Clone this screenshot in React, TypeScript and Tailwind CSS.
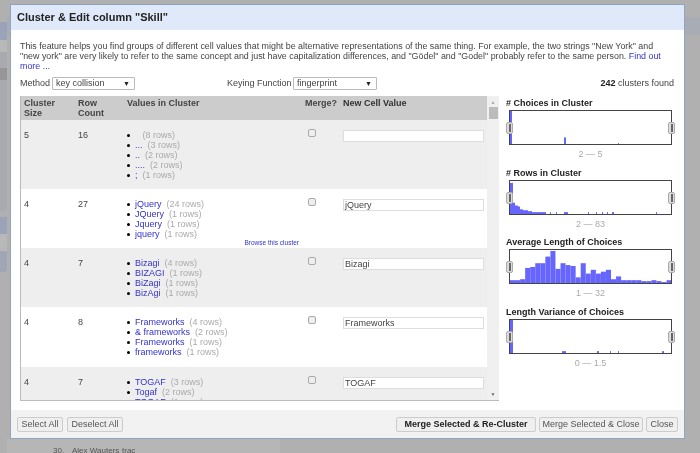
const FONT = "font-['Liberation_Sans',Arial,sans-serif]";

type Row = { size: number; count: number; bg: string; h: string; input: string; values: [string, string][]; browse?: boolean };

const rows: Row[] = [
  { size: 5, count: 16, bg: "bg-[#eeeeee]", h: "h-[69px]", input: "", values: [["\u00a0", "8 rows"], ["...", "3 rows"], ["..", "2 rows"], ["....", "2 rows"], [";", "1 rows"]] },
  { size: 4, count: 27, bg: "bg-white", h: "h-[59px]", input: "jQuery", browse: true, values: [["jQuery", "24 rows"], ["JQuery", "1 rows"], ["Jquery", "1 rows"], ["jquery", "1 rows"]] },
  { size: 4, count: 7, bg: "bg-[#eeeeee]", h: "h-[59px]", input: "Bizagi", values: [["Bizagi", "4 rows"], ["BIZAGI", "1 rows"], ["BiZagi", "1 rows"], ["BizAgi", "1 rows"]] },
  { size: 4, count: 8, bg: "bg-white", h: "h-[60px]", input: "Frameworks", values: [["Frameworks", "4 rows"], ["& frameworks", "2 rows"], ["Frameworks", "1 rows"], ["frameworks", "1 rows"]] },
  { size: 4, count: 7, bg: "bg-[#eeeeee]", h: "h-[59px]", input: "TOGAF", values: [["TOGAF", "3 rows"], ["Togaf", "2 rows"], ["TOGAF", "1 rows"]] },
];

type Bar = [number, number, number];

const seq = (start: number, w: number, hs: number[]): Bar[] => hs.map((h, i) => [start + i * w, w, h] as Bar);

const charts: { title: string; range: string; bars: Bar[]; mt: string }[] = [
  { title: "# Choices in Cluster", range: "2 — 5", mt: "mt-0", bars: [[0, 2, 35], [54, 2, 7], [108, 1, 1]] },
  {
    title: "# Rows in Cluster", range: "2 — 83", mt: "mt-[7px]",
    bars: [[0, 3, 33], [3, 2, 12], [5, 3, 9], [8, 2, 8], [10, 3, 5], [13, 5, 4], [18, 4, 3], [22, 14, 2], [40, 1, 2], [46, 1, 2], [54, 4, 2], [78, 1, 2], [86, 1, 2], [92, 1, 2], [97, 1, 2], [102, 2, 2], [146, 1, 2]],
  },
  {
    title: "Average Length of Choices", range: "1 — 32", mt: "mt-[6px]",
    bars: seq(0, 5.05, [3, 3, 4, 16, 17, 21, 21, 28, 34, 15, 21, 19, 18, 6, 21, 10, 14, 10, 12, 14, 4, 7, 3, 3, 3, 3, 2, 2, 3, 2, 1, 3]),
  },
  {
    title: "Length Variance of Choices", range: "0 — 1.5", mt: "mt-[7px]",
    bars: [[0, 3, 35], [52, 4, 2], [87, 2, 2], [100, 1, 2], [108, 1, 2], [152, 2, 2]],
  },
];

function Handle({ side }: { side: "left-[-4px]" | "right-[-4px]" }) {
  return (
    <div className={`absolute top-[11px] ${side} flex h-[12px] w-[7px] items-center justify-center rounded-[2px] border border-[#aaaaaa] bg-[#dddddd]`}>
      <div className="h-[8px] w-[2px] bg-[#666666]" />
    </div>
  );
}

function Chart({ title, range, bars, mt }: { title: string; range: string; bars: Bar[]; mt: string }) {
  return (
    <div className={mt}>
      <div className="h-[12px] text-[9px] leading-[12px] font-bold text-[#222222]">{title}</div>
      <div className="relative mt-[1px] ml-[3px] h-[35px] w-[163px] border border-[#444444] bg-white">
        <svg width="161" height="33" viewBox="0 0 161 35" preserveAspectRatio="none" className="block">
          {bars.map(([x, w, h], i) => (
            <rect key={i} x={x} y={35 - h} width={w} height={h} fill="#6666ff" />
          ))}
        </svg>
        <Handle side="left-[-4px]" />
        <Handle side="right-[-4px]" />
      </div>
      <div className="mt-[3px] ml-[3px] w-[163px] text-center text-[9px] leading-[12px] text-[#aaaaaa]">{range}</div>
    </div>
  );
}

function Btn({ children, bold, w }: { children: string; bold?: boolean; w: string }) {
  return (
    <button className={`${w} h-[15px] rounded-[2px] border border-[#cccccc] bg-[#efefef] text-center text-[9px] leading-[13px] whitespace-nowrap ${bold ? "font-bold text-[#222222]" : "text-[#555555]"}`}>
      {children}
    </button>
  );
}

function Select({ value, w }: { value: string; w: string }) {
  return (
    <div className={`${w} -mt-[1px] flex h-[13px] items-center justify-between rounded-[1px] border border-[#bbbbbb] bg-white pr-[4px] pl-[3px] text-[9px] leading-[11px] text-[#444444]`}>
      <span>{value}</span>
      <span className="text-[7px] leading-[7px] text-[#222222]">▼</span>
    </div>
  );
}

function ClusterRow({ r }: { r: Row }) {
  return (
    <div className={`${r.bg} ${r.h} relative flex shrink-0 pt-[10px] text-[9px] leading-[10px] text-[#444444]`}>
      <div className="w-[57px] pl-[3px]">{r.size}</div>
      <div className="w-[49px]">{r.count}</div>
      <ul className="w-[178px] list-none">
        {r.values.map(([v, c], i) => (
          <li key={i} className="flex items-center">
            <span className="mr-[5px] h-[3px] w-[3px] shrink-0 rounded-full bg-black" />
            <span className="text-[#3333cc]">{v}</span>
            <span className="ml-[5px] text-[#aaaaaa]">({c})</span>
          </li>
        ))}
      </ul>
      <div className="-mt-[1px] w-[38px] pl-[3px]">
        <div className="h-[8px] w-[8px] rounded-[2px] border border-[#aaaaaa] bg-[#eeeeee]" />
      </div>
      <div className="h-[12px] w-[141px] border border-[#dddddd] bg-white px-[1px] text-[9px] leading-[10px] text-[#444444]">{r.input}</div>
      {r.browse && (
        <div className="absolute right-[188px] bottom-[1px] text-[6.5px] leading-[8px] text-[#3333cc]">Browse this cluster</div>
      )}
    </div>
  );
}

export default function App() {
  return (
    <div className={`${FONT} relative h-[453px] w-[700px] overflow-hidden bg-[#b0b0b0] blur-[0.4px]`}>
      {/* page behind the dialog */}
      <div className="flex h-[453px]">
        <div className="flex w-[7px] shrink-0 flex-col">
          <div className="mt-[22px] h-[189px] rounded-r-[3px] bg-[#a9a9b0]">
            <div className="h-[18px] bg-[#9aa3b8]" />
            <div className="h-[12px] bg-[#b8b8b8]" />
            <div className="mt-[16px] h-[12px] bg-[#969696]" />
          </div>
          <div className="mt-[6px] h-[55px] rounded-r-[3px] bg-[#a0a6b6]">
            <div className="h-[17px] bg-[#9aa3b8]" />
            <div className="h-[17px] bg-[#b8b8b8]" />
          </div>
        </div>
        <div className="flex min-w-0 flex-1 flex-col">
          <div className="mt-[17px] h-[18px] w-full bg-[#a8acb4]" />
          <div className="mt-auto flex h-[14px] w-[273px] items-start overflow-hidden bg-[#b6b6b6] pt-[7px] pl-[46px] text-[8px] leading-[9px] text-[#555555]">
            <span className="w-[19px]">30.</span>
            <span className="w-[50px]">Alex Wauters</span>
            <span>trac</span>
          </div>
        </div>
      </div>

      {/* dialog */}
      <div className="absolute top-[4px] left-[10px] flex h-[435px] w-[675px] flex-col border border-[#8ea6c0] bg-white">
        <div className="flex h-[25px] shrink-0 items-center bg-[#dfe9fa] pl-[6px] text-[11px] font-bold text-[#222222]">
          Cluster &amp; Edit column "Skill"
        </div>

        <div className="flex min-h-0 flex-1 flex-col px-[9px] pt-[11px]">
          <p className="h-[31px] text-[8.9px] leading-[10px] whitespace-nowrap text-[#444444]">
            This feature helps you find groups of different cell values that might be alternative representations of the same thing. For example, the two strings "New York" and
            <br />
            "new york" are very likely to refer to the same concept and just have capitalization differences, and "Gödel" and "Godel" probably refer to the same person.{" "}
            <span className="text-[#3333cc]">Find out</span>
            <br />
            <span className="text-[#3333cc]">more ...</span>
          </p>

          <div className="mt-[5px] flex h-[14px] items-center text-[9px] text-[#444444]">
            <span className="w-[32px]">Method</span>
            <Select value="key collision" w="w-[83px]" />
            <span className="ml-[92px] w-[66px]">Keying Function</span>
            <Select value="fingerprint" w="w-[84px]" />
            <span className="ml-auto pr-[1px]">
              <b className="text-[#222222]">242</b> clusters found
            </span>
          </div>

          <div className="mt-[5px] flex min-h-0 flex-1 gap-[7px]">
            <div className="flex h-[305px] w-[479px] shrink-0 border-b border-l border-[#bbbbbb]">
              <div className="flex min-w-0 flex-1 flex-col overflow-hidden">
                <div className="flex h-[24px] shrink-0 bg-[#cccccc] pt-[2px] text-[9px] leading-[10px] font-bold text-[#444444]">
                  <div className="w-[57px] pl-[3px]">Cluster<br />Size</div>
                  <div className="w-[49px]">Row<br />Count</div>
                  <div className="w-[178px]">Values in Cluster</div>
                  <div className="w-[38px]">Merge?</div>
                  <div className="text-[#333333]">New Cell Value</div>
                </div>
                {rows.map((r, i) => (
                  <ClusterRow key={i} r={r} />
                ))}
              </div>
              <div className="flex w-[12px] shrink-0 flex-col items-center bg-[#f0f0f0]">
                <span className="mt-[3px] text-[5px] leading-[6px] text-[#aaaaaa]">▲</span>
                <div className="mt-[2px] h-[12px] w-[9px] bg-[#bcbcbc]" />
                <span className="mt-auto mb-[3px] text-[5px] leading-[6px] text-[#666666]">▼</span>
              </div>
            </div>

            <div className="w-[169px] pt-[1px]">
              {charts.map((c) => (
                <Chart key={c.title} {...c} />
              ))}
            </div>
          </div>
        </div>

        <div className="flex h-[28px] shrink-0 items-center bg-[#f2f2f2] px-[6px]">
          <div className="flex gap-[4px]">
            <Btn w="w-[46px]">Select All</Btn>
            <Btn w="w-[56px]">Deselect All</Btn>
          </div>
          <div className="ml-auto flex gap-[3px]">
            <Btn bold w="w-[140px]">Merge Selected &amp; Re-Cluster</Btn>
            <Btn w="w-[104px]">Merge Selected &amp; Close</Btn>
            <Btn w="w-[32px]">Close</Btn>
          </div>
        </div>
      </div>
    </div>
  );
}
